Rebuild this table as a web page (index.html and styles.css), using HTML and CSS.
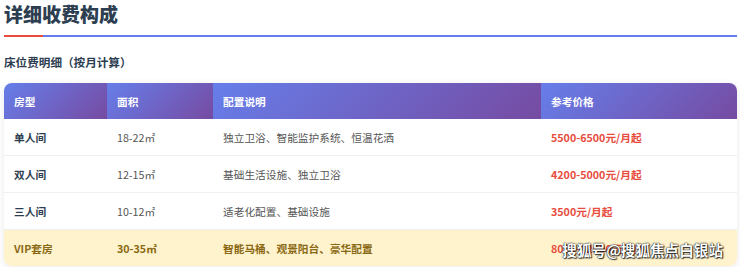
FILE: index.html
```html
<!DOCTYPE html>
<html lang="zh-CN">
<head>
<meta charset="utf-8">
<title>详细收费构成</title>
<link rel="stylesheet" href="styles.css">
</head>
<body>
<div class="page">
  <h2 class="title">详细收费构成</h2>
  <h3 class="subtitle">床位费明细（按月计算）</h3>
  <div class="table-wrap">
    <table class="fee-table">
      <colgroup>
        <col class="c1"><col class="c2"><col class="c3"><col class="c4">
      </colgroup>
      <thead>
        <tr><th>房型</th><th>面积</th><th>配置说明</th><th>参考价格</th></tr>
      </thead>
      <tbody>
        <tr><td class="type">单人间</td><td>18-22㎡</td><td>独立卫浴、智能监护系统、恒温花洒</td><td class="price">5500-6500元/月起</td></tr>
        <tr><td class="type">双人间</td><td>12-15㎡</td><td>基础生活设施、独立卫浴</td><td class="price">4200-5000元/月起</td></tr>
        <tr><td class="type">三人间</td><td>10-12㎡</td><td>适老化配置、基础设施</td><td class="price">3500元/月起</td></tr>
        <tr class="vip"><td class="type">VIP套房</td><td>30-35㎡</td><td>智能马桶、观景阳台、豪华配置</td><td class="price">8000-12000元/月起</td></tr>
      </tbody>
    </table>
  </div>
  <div class="watermark">搜狐号@搜狐焦点白银站</div>
</div>
</body>
</html>
```

FILE: styles.css
```css
html, body {
  margin: 0;
  padding: 0;
  background: #ffffff;
}
body {
  font-family: "Noto Sans CJK SC", "Noto Sans", sans-serif;
  color: #333333;
  overflow: hidden;
}
.page {
  position: relative;
  width: 733px;
  padding: 0 3px 0 4px;
  height: 267px;
}
.title {
  position: relative;
  margin: 0;
  font-size: 19px;
  line-height: 28px;
  font-weight: 900;
  color: #2c3e50;
  padding-bottom: 7px;
  border-bottom: 2px solid #667eea;
}
.title::after {
  content: "";
  position: absolute;
  left: 0;
  bottom: -2px;
  width: 39px;
  height: 2px;
  background: #e74c3c;
}
.subtitle {
  margin: 15px 0 11px;
  font-size: 11.6px;
  line-height: 20px;
  font-weight: 700;
  color: #2c3e50;
}
.table-wrap {
  border-radius: 8px;
  overflow: hidden;
  box-shadow: 0 2px 8px rgba(0, 0, 0, 0.09);
  background: #fff;
}
.fee-table {
  width: 100%;
  border-collapse: collapse;
  table-layout: fixed;
  font-size: 10.7px;
}
.c1 { width: 103px; }
.c2 { width: 106px; }
.c3 { width: 328px; }
.c4 { width: 196px; }
.fee-table th {
  height: 36px;
  padding: 0 10px;
  text-align: left;
  font-weight: 700;
  color: #ffffff;
  background: linear-gradient(135deg, #667eea 0%, #764ba2 100%);
}
.fee-table td {
  height: 36px;
  padding: 0 10px;
  color: #555555;
  border-bottom: 1px solid #f0f0f0;
  white-space: nowrap;
}
.fee-table tbody tr:last-child td {
  border-bottom: none;
}
.fee-table td.type {
  font-weight: 700;
  color: #2c3e50;
}
.fee-table td.price {
  font-weight: 700;
  color: #e74c3c;
}
.fee-table tr.vip td {
  background: #fff3cd;
  color: #8a6914;
  font-weight: 700;
}
.fee-table tr.vip td.price {
  color: #e74c3c;
}
.watermark {
  position: absolute;
  right: 17px;
  top: 240px;
  font-size: 14.6px;
  line-height: 20px;
  font-weight: 700;
  color: #ffffff;
  text-shadow: 0 0 1px #000, 0 0 2px rgba(0,0,0,0.8), 1px 1px 1px rgba(0,0,0,0.7);
}
```
